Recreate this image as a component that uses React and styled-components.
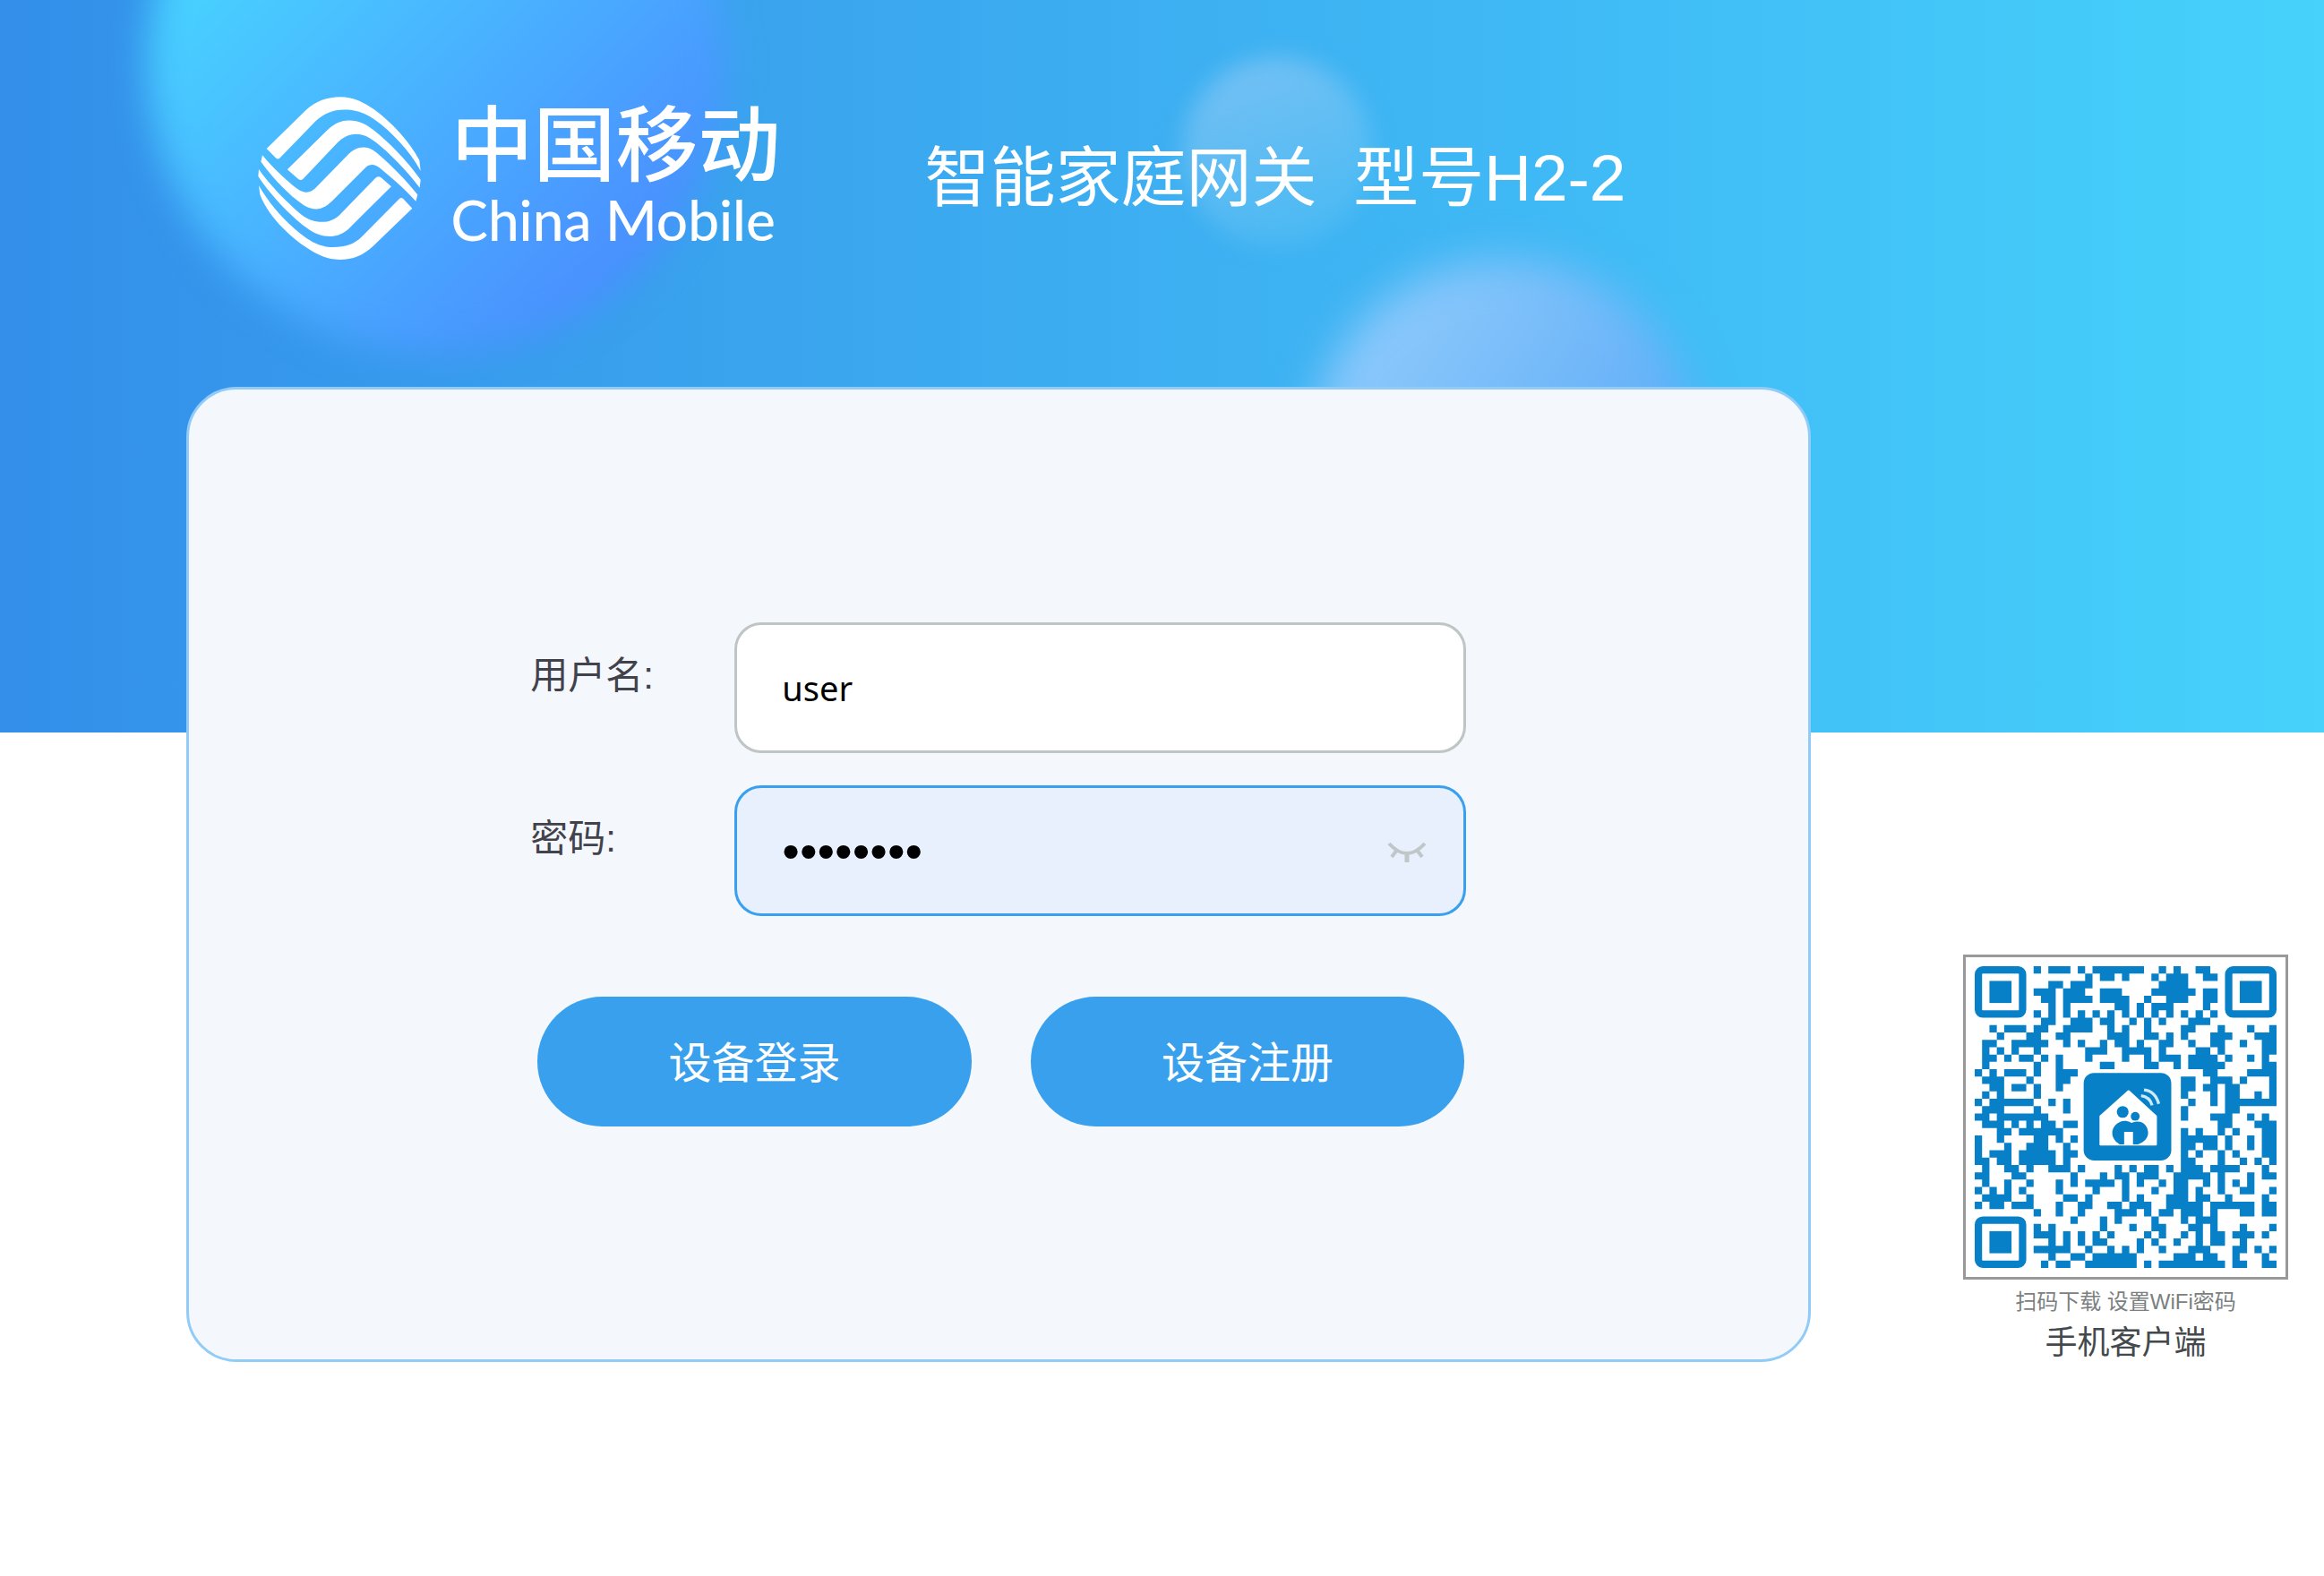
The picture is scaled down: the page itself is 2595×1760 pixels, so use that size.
import React, { useState } from 'react'
import styled, { createGlobalStyle } from 'styled-components'

const GlobalStyle = createGlobalStyle`
    *, *::before, *::after {
        box-sizing: border-box;
    }

    body {
        margin: 0;
        background-color: #ffffff;
        font-family: 'Liberation Sans', 'Noto Sans CJK SC', sans-serif;
    }
`

const Hero = styled.header`
    position: relative;
    display: flex;
    align-items: flex-start;
    height: 818px;
    padding: 108px 40px 0 calc(8% + 80px);
    overflow: hidden;
    background: linear-gradient(90deg, #338fea 0%, #3aa5ee 34%, #3fb9f5 66%, #46d2fb 100%);
`

const Blob = styled.div`
    position: absolute;
    left: ${props => props.$x}px;
    top: ${props => props.$y}px;
    width: ${props => props.$size}px;
    height: ${props => props.$size}px;
    border-radius: 50%;
    background: linear-gradient(${props => props.$angle}deg, ${props => props.$from}, ${props => props.$to});
    filter: blur(${props => props.$blur}px);
`

const HeroRow = styled.div`
    position: relative;
    display: flex;
    align-items: center;
    height: 182px;
    color: #ffffff;
`

const Emblem = styled.svg`
    flex: none;
    width: 182px;
    height: 182px;
    margin-right: 28px;
`

const Wordmark = styled.div`
    flex: none;
    width: 376px;
    margin-right: 159px;
    padding-left: 6px;
    white-space: nowrap;
`

const ChineseName = styled.div`
    font-family: 'Noto Sans CJK SC', sans-serif;
    font-size: 92px;
    font-weight: 500;
    line-height: 92px;
`

const EnglishName = styled.div`
    font-family: Lato, sans-serif;
    font-size: 62px;
    font-weight: 500;
    line-height: 88px;
`

const Title = styled.h1`
    margin: 0;
    font-size: 73px;
    font-weight: 400;
    line-height: 88px;
    white-space: pre;
`

const Main = styled.main`
    position: relative;
    display: flex;
    align-items: flex-end;
    gap: 170px;
    margin-top: -386px;
    padding: 0 40px 0 8%;
`

const Card = styled.section`
    flex: 1;
    display: flex;
    justify-content: center;
    padding: 260px 40px;
    border: 3px solid #91ccf8;
    border-radius: 56px;
    background-color: #f4f7fc;
`

const Form = styled.form`
    width: 1045px;
`

const Field = styled.div`
    display: grid;
    grid-template-columns: 228px 1fr;
    margin-bottom: 36px;
`

const Label = styled.label`
    color: #41424b;
    font-size: 42px;
    line-height: 120px;
`

const InputWrap = styled.div`
    position: relative;
`

const Input = styled.input`
    display: block;
    width: 100%;
    height: 146px;
    padding: 0 50px;
    border: 3px solid ${props => (props.$active ? '#38a0ee' : '#bfc4c4')};
    border-radius: 30px;
    outline: none;
    background-color: ${props => (props.$active ? '#e8effd' : '#ffffff')};
    color: #000000;
    font-family: 'Noto Sans', 'Noto Sans CJK SC', sans-serif;
    font-size: 38px;

    &[type='password'] {
        font-family: 'Liberation Sans', sans-serif;
        font-size: 56px;
    }
`

const RevealButton = styled.button`
    position: absolute;
    top: 62px;
    right: 44px;
    display: flex;
    padding: 0;
    border: 0;
    background: none;
    cursor: pointer;
`

const Actions = styled.div`
    display: flex;
    gap: 66px;
    margin-top: 90px;
    padding: 0 2px 0 8px;
`

const ActionButton = styled.button`
    flex: 1;
    height: 145px;
    padding: 0 0 6px;
    border: 0;
    border-radius: 73px;
    background-color: #38a0ed;
    color: #ffffff;
    font-family: inherit;
    font-size: 48px;
    cursor: pointer;
`

const Download = styled.aside`
    flex: none;
    width: 363px;
    text-align: center;
`

const QrFrame = styled.div`
    padding: 10px;
    border: 3px solid #999999;
    background-color: #ffffff;

    svg {
        display: block;
        width: 100%;
    }
`

const Hint = styled.p`
    margin: 0;
    color: #7b8080;
    font-size: 24px;
    line-height: 50px;
`

const ClientName = styled.p`
    margin: 0;
    color: #44494c;
    font-size: 36px;
    line-height: 42px;
`

// dark modules of every row, as single columns and ranges; finders are drawn apart
const QR_ROWS = [
    '8 10-12 14 16-22 25 27 30-31',
    '15 17-18 20 24 26-28 31-32',
    '10-11 13-15 25-28',
    '8-10 12-14 17-19 24-29 31-32',
    '9-10 12-15 17-20 23 26-28 31-32',
    '10 12 19-20 22 24-26 31',
    '8 10 12 14 16 18 20 22 24 26 28 30 32',
    '9-10 13-15 17-18 21 23 25 29-31',
    '2 4-6 8-9 12-15 18 20 23 28-29 33 37 40',
    '3 7-8 11-12 18-20 23-24 26 28 32-34 38-40',
    '1-2 5-9 12 14 17 19-20 22 25-26 29 32-33 36 39-40',
    '1 3 5 8 15-17 20-23 25 30-31 33 39-40',
    '1-2 4 6-7 9 11 15 20 23 25-27 29-32 34 37 39',
    '1 8 11 17-18 23-24 27 29-33 39-40',
    '0 2 4-6 8 11-13 31-32 37-40',
    '1-3 7 11-12 28-29 32-34 36 40',
    '2-3 5-6 8 11 28-29 31-32 34-35 40',
    '1 3 8 28 32 34-35 38 40',
    '0 2-7 10 12 29 32 34-40',
    '1-3 8 12 28 34-35',
    '0-1 3-9 28 32-34 37 39',
    '1-3 5 7 9-10 12-13 33-34 38-40',
    '3-4 6-11 28 30 33 35 39-40',
    '0 3 8-9 11 13 28-32 34 37 39-40',
    '0 4 7-9 12 28-29 31-32 34 37 39-40',
    '0 2-4 6-10 12-13 28 30 33 35 39-40',
    '0-1 3-4 6-10 12 28-29 33 36 38 40',
    '1 4-5 7 10-12 14 19 21 23-24 26 28-30 32-35 39',
    '0-1 5-6 13 17 19-20 22-24 27-31 33 37 39-40',
    '1 4 7 11 13 15-18 20 22 25 27-28 31 33 35 37',
    '0 2 4 6 11 16 20 24 27-28 30 33 36-37 40',
    '1-4 7 12-13 15 20 22 26-28 30-31 34 39',
    '0 2-3 5-7 11 14-15 18-19 21-23 26-30 32-37 39-40',
    '8 11 14 19-21 23 25-26 28-30 32 36-37 39-40',
    '13 17 19 24 28 30-32',
    '8 10 17 21 24-25 29-30 32 36 40',
    '8-10 12 14 16 18 23 25 28 30 32-33 35-37 39',
    '10 12 14 16-17 22 24 27 30 32-33 36',
    '8-12 15 18 20 22 25 29-31 35-36 38 40',
    '10 13-14 16-21 27-29 31-32 35 39',
    '9 11-12 15-21 23 25-33 35-36 39-40',
]

const qrPath = QR_ROWS.map((row, y) =>
    row
        .split(' ')
        .map(run => {
            const [start, end = start] = run.split('-').map(Number)
            const width = end - start + 1
            return `M${start} ${y}h${width}v1h-${width}z`
        })
        .join(''),
).join('')

const Finder = ({ x, y }) => (
    <g transform={`translate(${x} ${y})`}>
        <rect x={0.5} y={0.5} width={6} height={6} rx={0.6} fill="none" stroke="#0780c8" />
        <rect x={2} y={2} width={3} height={3} fill="#0780c8" />
    </g>
)

const QrCode = () => (
    <svg viewBox="0 0 41 41" role="img" aria-label="手机客户端二维码">
        <path d={qrPath} fill="#0780c8" />
        <Finder x={0} y={0} />
        <Finder x={34} y={0} />
        <Finder x={0} y={34} />
        <rect x={14.2} y={14} width={13} height={13} fill="#ffffff" />
        <rect x={14.8} y={14.5} width={11.9} height={11.9} rx={1.4} fill="#0780c8" />
        <path
            d="M20.9 17l3.7 3.4v3.8h-7.5v-3.8z"
            fill="#ffffff"
            stroke="#ffffff"
            strokeWidth={0.3}
            strokeLinejoin="round"
        />
        <g fill="#0780c8">
            <circle cx={20.1} cy={19.8} r={0.8} />
            <circle cx={21.8} cy={20.4} r={0.6} />
            <path d="M18.7 22.4a1.7 1.7 0 0 1 2.6-1.1a1.5 1.5 0 0 1 1.5 2.6l-.6.3h-.7v-1.7h-1.2v1.7h-.6c-.7-.4-1.1-1-1-1.8z" />
        </g>
        <path
            d="M23 16.8c1 .1 1.7.8 2 1.9M22.6 17.6c.8.1 1.3.6 1.5 1.3"
            fill="none"
            stroke="#cdeafa"
            strokeWidth={0.4}
        />
    </svg>
)

const ChinaMobileEmblem = () => (
    <Emblem viewBox="53 53 544 544" fill="#ffffff" aria-hidden="true">
        <path d="M82 226L213 98C245 68 285 54 328 54C375 54 410 75 440 95C500 138 560 205 592 265L596 300C560 235 500 170 440 128C405 103 375 96 342 96C300 96 272 110 245 135L126 258Q120 264 113 258Z" />
        <path d="M151 296L284 165C310 140 335 131 358 132C390 132 415 145 440 165C490 205 550 265 596 330L593 357C550 300 490 240 450 208C425 188 405 178 382 178C355 178 335 190 318 207L204 327Q196 334 188 328Z" />
        <path d="M68 248C100 287 150 335 185 361C210 378 228 374 245 358L350 250C370 230 385 222 405 222C425 222 440 232 455 245C500 283 550 335 586 380L580 402C545 362 495 320 465 295C445 278 430 276 415 287L300 402C280 420 265 428 248 428C220 428 205 415 185 400C140 365 95 315 63 270Z" />
        <path d="M56 295C90 345 150 405 190 440C215 462 240 471 268 471C290 471 310 462 325 448L444 326Q453 316 464 323L498 353L370 480C345 508 320 519 296 519C265 519 240 510 215 490C160 450 90 375 54 318Z" />
        <path d="M56 350C90 410 150 480 215 525C245 545 270 555 305 555C345 555 375 545 400 520L525 394Q531 388 538 394L568 426L437 552C405 582 370 597 325 597C285 597 250 580 220 560C150 515 85 445 60 380Z" />
    </Emblem>
)

const ClosedEye = () => (
    <svg width={44} height={26} viewBox="0 0 44 26" fill="none" stroke="#bfc7c9" strokeWidth={4}>
        <path d="M2 3Q22 25 42 3M11 10L5 18M33 10L39 18" />
        <path d="M22 14V24" strokeWidth={5} />
    </svg>
)

const App = () => {
    const [username, setUsername] = useState('user')
    const [password, setPassword] = useState('password')
    const [visible, setVisible] = useState(false)

    return (
        <>
            <GlobalStyle />
            <Hero>
                <Blob $x={165} $y={-250} $size={644} $blur={20} $angle={135} $from="#48d8ff 15%" $to="#4a8eff 85%" />
                <Blob $x={1320} $y={64} $size={212} $blur={13} $angle={160} $from="rgba(160, 205, 245, 0.6)" $to="rgba(90, 200, 245, 0.25)" />
                <Blob $x={1464} $y={290} $size={432} $blur={24} $angle={125} $from="#98d0fc" $to="#4ea2f6" />
                <HeroRow>
                    <ChinaMobileEmblem />
                    <Wordmark>
                        <ChineseName>中国移动</ChineseName>
                        <EnglishName>China Mobile</EnglishName>
                    </Wordmark>
                    <Title>{'智能家庭网关  型号H2-2'}</Title>
                </HeroRow>
            </Hero>
            <Main>
                <Card>
                    <Form onSubmit={e => e.preventDefault()}>
                        <Field>
                            <Label htmlFor="username">用户名:</Label>
                            <InputWrap>
                                <Input
                                    id="username"
                                    type="text"
                                    value={username}
                                    onChange={e => setUsername(e.target.value)}
                                />
                            </InputWrap>
                        </Field>
                        <Field>
                            <Label htmlFor="password">密码:</Label>
                            <InputWrap>
                                <Input
                                    id="password"
                                    type={visible ? 'text' : 'password'}
                                    value={password}
                                    onChange={e => setPassword(e.target.value)}
                                    $active
                                />
                                <RevealButton
                                    type="button"
                                    aria-label="显示密码"
                                    onClick={() => setVisible(!visible)}>
                                    <ClosedEye />
                                </RevealButton>
                            </InputWrap>
                        </Field>
                        <Actions>
                            <ActionButton type="submit">设备登录</ActionButton>
                            <ActionButton type="button">设备注册</ActionButton>
                        </Actions>
                    </Form>
                </Card>
                <Download>
                    <QrFrame>
                        <QrCode />
                    </QrFrame>
                    <Hint>扫码下载 设置WiFi密码</Hint>
                    <ClientName>手机客户端</ClientName>
                </Download>
            </Main>
        </>
    )
}

export default App
